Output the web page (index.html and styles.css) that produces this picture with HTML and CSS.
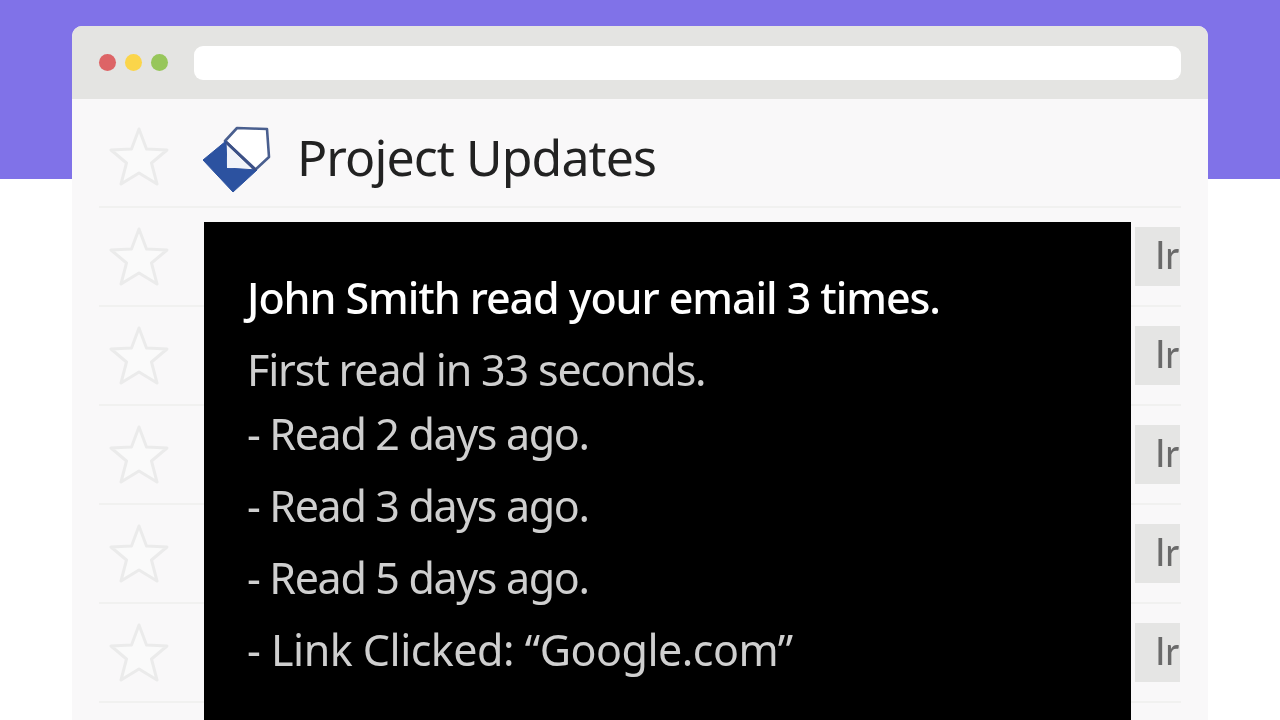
FILE: index.html
```html
<!DOCTYPE html>
<html lang="en">
<head>
<meta charset="utf-8">
<title>Project Updates</title>
<link rel="stylesheet" href="styles.css">
</head>
<body>
<svg class="defs" width="0" height="0" aria-hidden="true">
  <symbol id="star" viewBox="0 0 60 60">
    <path d="M30 2 L37.5 22 L58 23 L42.5 36 L48 57 L30 46 L12 57 L17.5 36 L2 23 L22.5 22 Z" fill="#fafafa" stroke="#ebebeb" stroke-width="3" stroke-linejoin="round"/>
  </symbol>
</svg>
<main class="window">
  <header class="titlebar">
    <span class="dot red"></span><span class="dot yellow"></span><span class="dot green"></span>
    <div class="address"></div>
  </header>
  <section class="list">
    <div class="row head">
      <svg class="star"><use href="#star"/></svg>
      <svg class="logo" viewBox="0 0 68 68">
        <path d="M22 16 L34 3 L64 4 L66 32 L52 45 Z" fill="#fff" stroke="#4a5f8f" stroke-width="2.6" stroke-linejoin="round"/>
        <path d="M0 35 L23 16 L24 43 L54 45 L30 67 Z" fill="#2c52a0" stroke="#2c52a0" stroke-linejoin="round"/>
        <path d="M24 21 L48 43 L24 43 Z" fill="#f1f3f9"/>
        <path d="M23 17 L53 45" stroke="#3c5086" stroke-width="3"/>
      </svg>
      <h1 class="title">Project Updates</h1>
    </div>
    <div class="row"><svg class="star"><use href="#star"/></svg><span class="tag">Ir</span></div>
    <div class="row"><svg class="star"><use href="#star"/></svg><span class="tag">Ir</span></div>
    <div class="row"><svg class="star"><use href="#star"/></svg><span class="tag">Ir</span></div>
    <div class="row"><svg class="star"><use href="#star"/></svg><span class="tag">Ir</span></div>
    <div class="row"><svg class="star"><use href="#star"/></svg><span class="tag">Ir</span></div>
  </section>
  <aside class="tooltip">
    <p class="lead">John Smith read your email 3 times.</p>
    <p class="first">First read in 33 seconds.</p>
    <p class="read tight">- Read 2 days ago.</p>
    <p class="read">- Read 3 days ago.</p>
    <p class="read">- Read 5 days ago.</p>
    <p class="read link">- Link Clicked: “Google.com”</p>
  </aside>
</main>
</body>
</html>
```
FILE: styles.css
```css
* { box-sizing: border-box; }
html, body { margin: 0; height: 720px; overflow: hidden; }
body {
  background: linear-gradient(#8072e8 0, #8072e8 179px, #fff 179px);
  font-family: "Noto Sans", "Open Sans", sans-serif;
  padding-top: 26px;
}
.defs { position: absolute; }
.window {
  position: relative;
  width: 1136px;
  height: 694px;
  margin-left: 72px;
  background: #f9f8f9;
  border-radius: 10px 10px 0 0;
  overflow: hidden;
  filter: blur(0.6px);
}
.titlebar {
  height: 73px;
  background: #e4e4e2;
  display: flex;
  align-items: center;
  padding: 0 27px 0 27px;
  gap: 9px;
}
.dot { width: 17px; height: 17px; border-radius: 50%; }
.dot.red { background: #dd6466; }
.dot.yellow { background: #fbd54a; }
.dot.green { background: #97c65a; }
.address {
  flex: 1;
  height: 34px;
  margin-left: 17px;
  background: #fff;
  border-radius: 9px;
}
.list { padding: 0 27px; }
.row {
  height: 99px;
  display: flex;
  align-items: center;
  border-bottom: 2px solid #f1f1f0;
}
.row.head { height: 109px; padding-top: 8px; }
.star { width: 60px; height: 60px; margin-left: 10px; flex: none; }
.logo { width: 68px; height: 68px; margin: 4px 0 0 34px; flex: none; }
.title {
  margin: 0 0 0 26px;
  font-size: 50px;
  font-weight: 400;
  letter-spacing: -0.9px;
  color: #222;
}
.tag {
  margin: 0 1px 0 auto;
  width: 45px;
  height: 59px;
  background: #e5e5e4;
  color: #6a6a6a;
  font-family: "Lato", sans-serif;
  font-size: 38px;
  line-height: 54px;
  padding-left: 20px;
  white-space: nowrap;
}
.tooltip {
  position: absolute;
  left: 132px;
  top: 196px;
  width: 927px;
  height: 520px;
  background: #000;
  padding: 40px 43px 0;
  color: #cfcfcf;
  font-size: 43px;
  letter-spacing: -1.15px;
}
.tooltip p { margin: 0; line-height: 72px; white-space: nowrap; }
.tooltip .lead { color: #fff; font-weight: 500; letter-spacing: -1.07px; }
.tooltip .read { letter-spacing: -1.35px; }
.tooltip .tight { margin-top: -8px; }
.tooltip .read.link { letter-spacing: -0.5px; }
```
